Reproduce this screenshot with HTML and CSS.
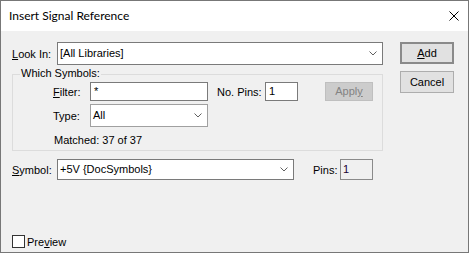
FILE: index.html
```html
<!DOCTYPE html>
<html>
<head>
    <meta charset="UTF-8">
    <title>Insert Signal Reference</title>
    <link rel="stylesheet" href="styles.css">
</head>
<body>
    <div class="window">
        <div class="titlebar">
            <span class="title">Insert Signal Reference</span>
            <svg class="close" width="10" height="10" viewBox="0 0 10 10">
                <path d="M0.5 0.5 L9.5 9.5 M9.5 0.5 L0.5 9.5" stroke="#000" stroke-width="1" fill="none"/>
            </svg>
        </div>

        <div class="client">
            <div class="main">
                <div class="row row-lookin">
                    <label class="lbl lbl-lookin"><u>L</u>ook In:</label>
                    <div class="combo combo-lookin">
                        <span>[All Libraries]</span>
                        <svg class="chev" width="8" height="5" viewBox="0 0 8 5"><polyline points="0.5,0.5 4,4 7.5,0.5" stroke="#606060" fill="none"/></svg>
                    </div>
                </div>

                <div class="group">
                    <div class="legend">Which Symbols:</div>

                    <div class="row row-filter">
                        <label class="lbl lbl-filter"><u>F</u>ilter:</label>
                        <div class="edit edit-filter">*</div>
                        <label class="lbl lbl-nopins">No. Pins:</label>
                        <div class="edit edit-nopins">1</div>
                        <div class="btn btn-disabled">Appl<u>y</u></div>
                    </div>

                    <div class="row row-type">
                        <label class="lbl lbl-filter">Type:</label>
                        <div class="combo combo-type">
                            <span>All</span>
                            <svg class="chev" width="8" height="5" viewBox="0 0 8 5"><polyline points="0.5,0.5 4,4 7.5,0.5" stroke="#606060" fill="none"/></svg>
                        </div>
                    </div>

                    <div class="matched">Matched: 37 of 37</div>
                </div>

                <div class="row row-symbol">
                    <label class="lbl lbl-lookin"><u>S</u>ymbol:</label>
                    <div class="combo combo-symbol">
                        <span>+5V {DocSymbols}</span>
                        <svg class="chev" width="8" height="5" viewBox="0 0 8 5"><polyline points="0.5,0.5 4,4 7.5,0.5" stroke="#606060" fill="none"/></svg>
                    </div>
                    <label class="lbl lbl-pins">Pins:</label>
                    <div class="edit edit-pins">1</div>
                </div>

                <div class="preview">
                    <span class="check"></span>
                    <span>Pre<u>v</u>iew</span>
                </div>
            </div>

            <div class="side">
                <div class="btn btn-default"><u>A</u>dd</div>
                <div class="btn">Cancel</div>
            </div>
        </div>
    </div>
</body>
</html>
```

FILE: styles.css
```css
* {
    box-sizing: border-box;
}

body {
    margin: 0;
    font-family: 'Liberation Sans', Arial, sans-serif;
    font-size: 11px;
    color: #000;
    background: #f0f0f0;
}

u {
    text-decoration: underline;
    text-underline-offset: 1px;
}

.window {
    width: 469px;
    height: 253px;
    border: 1px solid #777777;
    background: #f0f0f0;
    display: flex;
    flex-direction: column;
}

.titlebar {
    height: 30px;
    background: #fff;
    display: flex;
    align-items: center;
    padding-left: 8px;
}

.title {
    font-family: Lato, 'Noto Sans', sans-serif;
    font-size: 12px;
    flex: 1;
    padding-bottom: 1px;
}

.close {
    margin-right: 9px;
}

.client {
    flex: 1;
    display: flex;
    padding: 11px 0 0 11px;
}

.main {
    width: 372px;
}

.side {
    margin-left: 16px;
    display: flex;
    flex-direction: column;
    gap: 7px;
}

.row {
    display: flex;
    align-items: center;
}

.lbl {
    display: block;
    white-space: nowrap;
}

.lbl-lookin {
    width: 45px;
}

.combo {
    height: 23px;
    background: #fff;
    border: 1px solid #7a7a7a;
    display: flex;
    align-items: center;
    justify-content: space-between;
    padding: 0 5px 1px 2px;
}

.combo-lookin {
    width: 326px;
}

.combo-type {
    width: 118px;
    border-color: #a0a0a0;
}

.combo-symbol {
    width: 237px;
    height: 21px;
}

.chev {
    margin-top: 1px;
}

.group {
    width: 371px;
    height: 77px;
    margin-top: 9px;
    border: 1px solid #dcdcdc;
}

.legend {
    width: max-content;
    height: 13px;
    line-height: 13px;
    margin: -8px 0 0 7px;
    padding: 0 1px;
    background: #f0f0f0;
}

.row-filter {
    margin-top: 2px;
    padding-left: 40px;
}

.lbl-filter {
    width: 37px;
}

.edit {
    height: 19px;
    background: #fff;
    border: 1px solid #7a7a7a;
    padding: 1px 3px 0;
    line-height: 15px;
}

.edit-filter {
    width: 118px;
}

.lbl-nopins {
    width: 48px;
    margin-left: 9px;
}

.edit-nopins {
    width: 33px;
}

.btn {
    width: 54px;
    height: 22px;
    border: 1px solid #adadad;
    background: #e1e1e1;
    display: flex;
    align-items: center;
    justify-content: center;
    padding-bottom: 1px;
}

.btn-default {
    border: 2px solid #8a8a8a;
}

.btn-disabled {
    width: 48px;
    height: 19px;
    margin-left: 27px;
    background: #cccccc;
    border-color: #bfbfbf;
    color: #838383;
}

.row-type {
    margin-top: 3px;
    padding-left: 40px;
}

.matched {
    margin: 7px 0 0 41px;
    line-height: 13px;
}

.row-symbol {
    margin-top: 8px;
}

.lbl-pins {
    width: 27px;
    margin-left: 19px;
}

.edit-pins {
    width: 33px;
    height: 21px;
    background: #f0f0f0;
    border-color: #8a8a8a;
    padding: 2px 2px 0;
    color: #1a0030;
}

.preview {
    display: flex;
    align-items: center;
    gap: 2px;
    margin-top: 55px;
}

.check {
    width: 13px;
    height: 13px;
    border: 1px solid #333;
    background: #fff;
}
```
